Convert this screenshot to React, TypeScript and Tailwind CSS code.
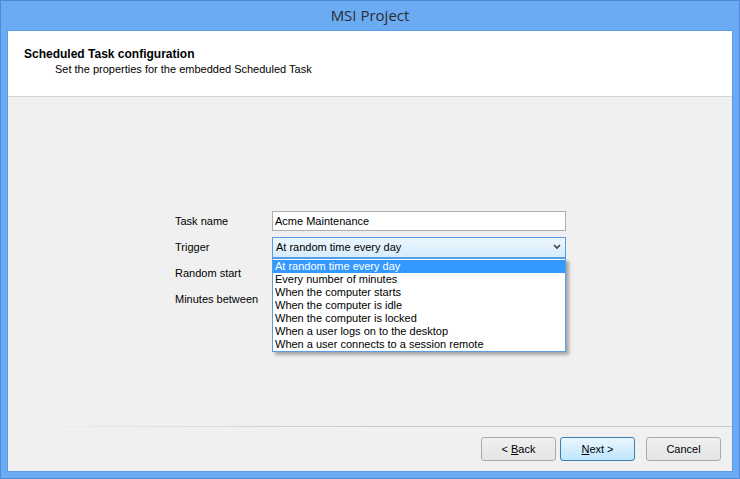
import React from "react"

const items = [
  "At random time every day",
  "Every number of minutes",
  "When the computer starts",
  "When the computer is idle",
  "When the computer is locked",
  "When a user logs on to the desktop",
  "When a user connects to a session remote",
]

function Row({ label, children }: { label: string; children?: React.ReactNode }) {
  return (
    <div className="flex h-[26px] items-center">
      <div className="w-[97px] shrink-0">{label}</div>
      <div className="relative w-[294px]">{children}</div>
    </div>
  )
}

function Button({ children, primary }: { children: React.ReactNode; primary?: boolean }) {
  return (
    <button
      className={
        primary
          ? "h-[24px] w-[75px] rounded-[3px] border border-[#3c7fb1] bg-gradient-to-b from-[#eaf6fd] to-[#bee6fd] text-black"
          : "h-[24px] w-[75px] rounded-[3px] border border-[#acacac] bg-gradient-to-b from-[#f0f0f0] to-[#e5e5e5] text-black"
      }
    >
      {children}
    </button>
  )
}

export default function App() {
  return (
    <div
      className="flex h-[479px] w-[740px] flex-col border border-[#4d8bd6] bg-[#6aabf4] text-[11px] text-black"
      style={{ fontFamily: "'Liberation Sans', Arial, sans-serif" }}
    >
      <div
        className="flex h-[29px] shrink-0 items-center justify-center text-[15px] text-[#2b2b2b]"
        style={{ fontFamily: "'Open Sans', 'Noto Sans', sans-serif" }}
      >
        MSI Project
      </div>

      <div className="mx-[6px] mb-[6px] flex flex-1 flex-col border border-[#5b9ce6] bg-[#f0f0f0]">
        <div className="h-[66px] shrink-0 border-b border-[#d5d5d5] bg-white pl-[16px] pt-[16px]">
          <div className="text-[12px] font-bold leading-[15px]">Scheduled Task configuration</div>
          <div className="pl-[31px] leading-[15px]">Set the properties for the embedded Scheduled Task</div>
        </div>

        <div className="flex flex-1 flex-col">
          <div className="pl-[167px] pt-[111px]">
            <Row label="Task name">
              <div className="flex h-[20px] items-center border border-[#abadb3] bg-white px-[2px]">Acme Maintenance</div>
            </Row>
            <Row label="Trigger">
              <div className="flex h-[21px] items-center justify-between border border-[#569de5] bg-gradient-to-b from-[#ecf6fd] to-[#d6ecfb] pl-[3px] pr-[4px]">
                <span>At random time every day</span>
                <svg width="8" height="6" viewBox="0 0 8 6">
                  <path d="M1 1 L4 4 L7 1" fill="none" stroke="#404040" strokeWidth="1.6" />
                </svg>
              </div>
              <div className="absolute left-0 top-full z-10 w-[294px] border border-[#569de5] bg-white pt-px shadow-[3px_3px_3px_rgba(0,0,0,0.3)]">
                {items.map((t, i) => (
                  <div
                    key={t}
                    className={i === 0 ? "h-[13px] bg-[#3399ff] pl-[2px] leading-[13px] text-white" : "h-[13px] pl-[2px] leading-[13px]"}
                  >
                    {t}
                  </div>
                ))}
              </div>
            </Row>
            <Row label="Random start" />
            <Row label="Minutes between" />
          </div>

          <div className="mt-auto">
            <div className="ml-[12px] h-px bg-gradient-to-r from-[#f0f0f0] via-[#c8c8c8] to-[#c8c8c8]" />
            <div className="flex justify-end pb-[10px] pr-[11px] pt-[10px]">
              <div className="mr-[4px]">
                <Button>
                  &lt; <span className="underline">B</span>ack
                </Button>
              </div>
              <div className="mr-[11px]">
                <Button primary>
                  <span className="underline">N</span>ext &gt;
                </Button>
              </div>
              <Button>Cancel</Button>
            </div>
          </div>
        </div>
      </div>
    </div>
  )
}
